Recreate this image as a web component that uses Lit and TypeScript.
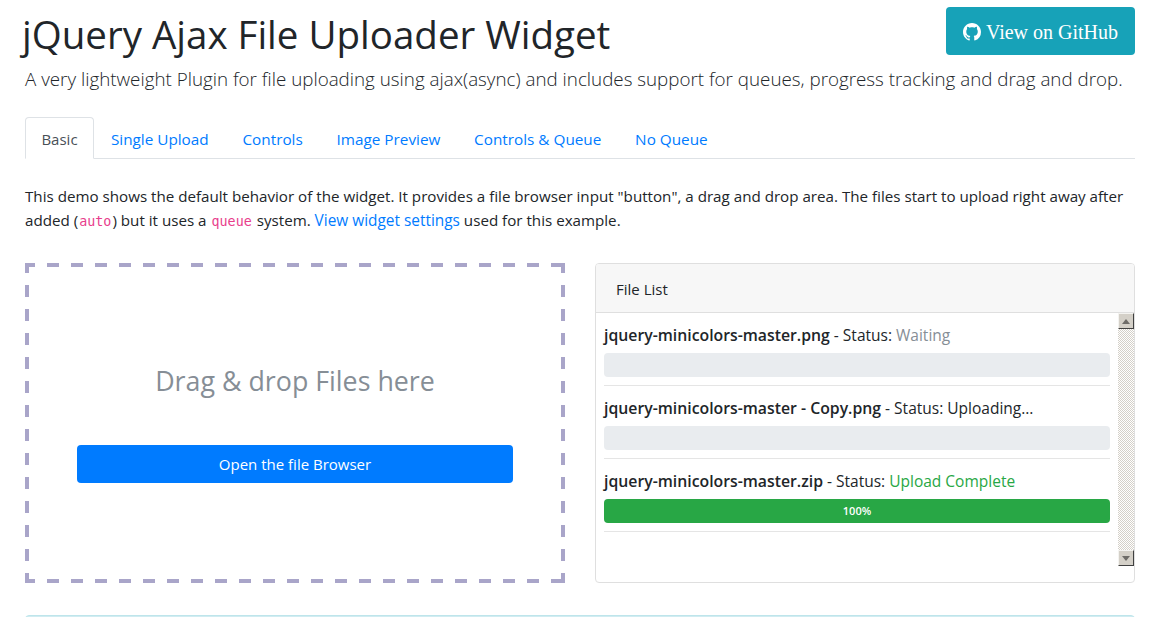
import { LitElement, html, css } from 'lit';
import { customElement } from 'lit/decorators.js';

interface UploadFile {
  name: string;
  status: string;
  statusClass: string;
  progress: number;
}

const tabs = ['Basic', 'Single Upload', 'Controls', 'Image Preview', 'Controls & Queue', 'No Queue'];

const files: UploadFile[] = [
  { name: 'jquery-minicolors-master.png', status: 'Waiting', statusClass: 'muted', progress: 0 },
  { name: 'jquery-minicolors-master - Copy.png', status: 'Uploading...', statusClass: '', progress: 0 },
  { name: 'jquery-minicolors-master.zip', status: 'Upload Complete', statusClass: 'success', progress: 100 },
];

@customElement('app-root')
export class AppRoot extends LitElement {
  static get styles() {
    return css`
    :host {
      display: block;
      height: 617px;
      overflow: hidden;
      box-sizing: border-box;
      padding: 7px 32px 0 25px;
      background: #fff;
      color: #212529;
      font-family: "Open Sans", "Noto Sans", sans-serif;
      font-size: 15px;
      line-height: 24px;
    }
    .header {
      display: flex;
      justify-content: space-between;
      align-items: flex-start;
      height: 48px;
    }
    h1 {
      margin: -1px 0 0 -3px;
      font-size: 38.5px;
      font-weight: 400;
      line-height: 56px;
      white-space: nowrap;
    }
    .github {
      display: flex;
      align-items: center;
      justify-content: center;
      gap: 5px;
      box-sizing: border-box;
      width: 189px;
      height: 48px;
      padding-top: 1px;
      border-radius: 4px;
      background: #17a2b8;
      color: #fff;
      font-family: "Liberation Serif", serif;
      font-size: 20px;
    }
    .github svg {
      width: 18px;
      height: 18px;
      fill: #fff;
    }
    .lead {
      margin: 9px 0 0;
      font-size: 18.8px;
      font-weight: 300;
      line-height: 30px;
      white-space: nowrap;
    }
    .tabs {
      display: flex;
      height: 42px;
      margin-top: 23px;
      box-sizing: border-box;
      border-bottom: 1px solid #dee2e6;
    }
    .tab {
      box-sizing: border-box;
      height: 42px;
      padding: 10px 16.9px 0;
      color: #007bff;
      font-size: 15.3px;
      white-space: nowrap;
    }
    .tab.active {
      width: 69px;
      padding: 9px 0 0;
      border: 1px solid #dee2e6;
      border-bottom-color: #fff;
      border-radius: 4px 4px 0 0;
      background: #fff;
      color: #495057;
      font-size: 15px;
      text-align: center;
    }
    .intro {
      margin: 25px 0 0;
      font-size: 15.17px;
      white-space: nowrap;
    }
    a {
      color: #007bff;
      font-size: 15.4px;
    }
    code {
      padding: 0 1px;
      color: #e83e8c;
      font-family: "DejaVu Sans Mono", monospace;
      font-size: 13.4px;
    }
    .columns {
      display: grid;
      grid-template-columns: 540px 540px;
      gap: 30px;
      margin-top: 29px;
    }
    .drop {
      --dash: #a9a5c9;
      box-sizing: border-box;
      height: 320px;
      padding: 0 52px;
      display: flex;
      flex-direction: column;
      background:
        repeating-linear-gradient(90deg, var(--dash) 0 10px, transparent 10px 22px, var(--dash) 22px 24px) top left / 100% 4px no-repeat,
        repeating-linear-gradient(90deg, var(--dash) 0 10px, transparent 10px 22px, var(--dash) 22px 24px) bottom left / 100% 4px no-repeat,
        repeating-linear-gradient(180deg, var(--dash) 0 10px, transparent 10px 22px, var(--dash) 22px 24px) top left / 4px 100% no-repeat,
        repeating-linear-gradient(180deg, var(--dash) 0 10px, transparent 10px 22px, var(--dash) 22px 24px) top right / 4px 100% no-repeat;
    }
    .drop-text {
      margin-top: 100px;
      color: #868e96;
      font-size: 26.8px;
      line-height: 36px;
      text-align: center;
    }
    .browse {
      margin-top: 46px;
      height: 38px;
      border-radius: 4px;
      background: #007bff;
      color: #fff;
      line-height: 38px;
      text-align: center;
    }
    .card {
      box-sizing: border-box;
      height: 320px;
      border: 1px solid #dfdfdf;
      border-radius: 4px;
      overflow: hidden;
    }
    .card-header {
      box-sizing: border-box;
      height: 49px;
      padding: 13px 20px;
      background: #f7f7f7;
      border-bottom: 1px solid #dfdfdf;
    }
    .card-body {
      display: flex;
      height: 253px;
    }
    .list {
      flex: 1;
      min-width: 0;
      padding: 0 8px;
    }
    .row {
      box-sizing: border-box;
      height: 73px;
      padding-top: 10px;
      border-bottom: 1px solid #e5e5e5;
      font-size: 15.5px;
      white-space: nowrap;
    }
    .row strong {
      font-size: 15.8px;
      font-weight: 600;
    }
    .muted {
      color: #868e96;
    }
    .success {
      color: #28a745;
    }
    .bar {
      margin-top: 6px;
      height: 24px;
      border-radius: 4px;
      background: #e9ecef;
      overflow: hidden;
    }
    .fill {
      height: 100%;
      background: #28a745;
      color: #fff;
      font-size: 11px;
      font-weight: 600;
      line-height: 24px;
      text-align: center;
    }
    .scrollbar {
      display: flex;
      flex-direction: column;
      width: 16px;
      background: repeating-conic-gradient(#d4d0c8 0 25%, #fff 0 50%) 0 0 / 2px 2px;
    }
    .track {
      flex: 1;
    }
    .arrow {
      box-sizing: border-box;
      display: flex;
      align-items: center;
      justify-content: center;
      width: 16px;
      height: 16px;
      background: #d4d0c8;
      border: 1px solid;
      border-color: #f4f3f0 #404040 #404040 #f4f3f0;
    }
    .arrow svg {
      width: 8px;
      height: 5px;
      fill: #6e6c68;
    }
    .alert {
      height: 20px;
      margin-top: 32px;
      box-sizing: border-box;
      border: 1px solid #bee5eb;
      border-radius: 4px;
      background: #d1ecf1;
    }
    `;
  }

  renderFile(file: UploadFile) {
    return html`
    <div class="row">
      <strong>${file.name}</strong> - Status: <span class="${file.statusClass}">${file.status}</span>
      <div class="bar">
        ${file.progress > 0
          ? html`<div class="fill" style="width: ${file.progress}%">${file.progress}%</div>`
          : ''}
      </div>
    </div>
    `;
  }

  render() {
    return html`
    <div class="header">
      <h1>jQuery Ajax File Uploader Widget</h1>
      <div class="github">
        <svg viewBox="0 0 16 16"><path d="M8 0C3.58 0 0 3.58 0 8c0 3.54 2.29 6.53 5.47 7.59.4.07.55-.17.55-.38 0-.19-.01-.82-.01-1.49-2.01.37-2.53-.49-2.69-.94-.09-.23-.48-.94-.82-1.13-.28-.15-.68-.52-.01-.53.63-.01 1.08.58 1.23.82.72 1.21 1.87.87 2.33.66.07-.52.28-.87.51-1.07-1.78-.2-3.64-.89-3.64-3.95 0-.87.31-1.59.82-2.15-.08-.2-.36-1.02.08-2.12 0 0 .67-.21 2.2.82.64-.18 1.32-.27 2-.27s1.36.09 2 .27c1.53-1.04 2.2-.82 2.2-.82.44 1.1.16 1.92.08 2.12.51.56.82 1.27.82 2.15 0 3.07-1.87 3.75-3.65 3.95.29.25.54.73.54 1.48 0 1.07-.01 1.93-.01 2.2 0 .21.15.46.55.38A8.01 8.01 0 0 0 16 8c0-4.42-3.58-8-8-8z"/></svg>
        View on GitHub
      </div>
    </div>
    <p class="lead">A very lightweight Plugin for file uploading using ajax(async) and includes support for queues, progress tracking and drag and drop.</p>
    <div class="tabs">
      ${tabs.map((tab, i) => html`<div class="tab ${i === 0 ? 'active' : ''}">${tab}</div>`)}
    </div>
    <p class="intro">
      This demo shows the default behavior of the widget. It provides a file browser input "button", a drag and drop area. The files start to upload right away after<br>
      added (<code>auto</code>) but it uses a <code>queue</code> system. <a>View widget settings</a> used for this example.
    </p>
    <div class="columns">
      <div class="drop">
        <div class="drop-text">Drag &amp; drop Files here</div>
        <div class="browse">Open the file Browser</div>
      </div>
      <div class="card">
        <div class="card-header">File List</div>
        <div class="card-body">
          <div class="list">
            ${files.map(file => this.renderFile(file))}
          </div>
          <div class="scrollbar">
            <div class="arrow"><svg viewBox="0 0 8 5"><path d="M4 0 8 5H0z"/></svg></div>
            <div class="track"></div>
            <div class="arrow"><svg viewBox="0 0 8 5"><path d="M0 0H8L4 5z"/></svg></div>
          </div>
        </div>
      </div>
    </div>
    <div class="alert"></div>
    `;
  }
}
